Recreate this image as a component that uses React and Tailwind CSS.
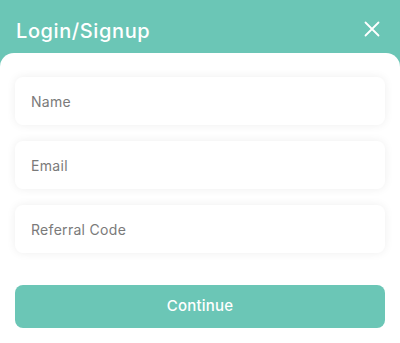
import React from "react";

const TEAL = "#6bc6b6";

function Field({ placeholder }) {
  return (
    <input
      type="text"
      placeholder={placeholder}
      className="w-full h-12 rounded-lg bg-white px-4 text-[14px] tracking-[0.3px] text-gray-700 placeholder:text-[#7a7a7a] outline-none shadow-[0_0_10px_rgba(0,0,0,0.07)]"
    />
  );
}

export default function App() {
  return (
    <div
      className="w-[400px] h-[343px] flex flex-col"
      style={{ backgroundColor: TEAL, fontFamily: "Inter, 'Noto Sans', sans-serif" }}
    >
      <div className="h-[53px] flex items-center justify-between pl-4 pr-5 pt-1">
        <h1 className="text-white text-[20px] font-medium tracking-[0.6px] pt-1">Login/Signup</h1>
        <button className="text-white">
          <svg width="16" height="16" viewBox="0 0 16 16" fill="none" stroke="currentColor" strokeWidth="1.8" strokeLinecap="round">
            <path d="M1.5 1.5L14.5 14.5M14.5 1.5L1.5 14.5" />
          </svg>
        </button>
      </div>
      <div className="flex-1 bg-white rounded-t-[14px] px-[15px] pt-6 flex flex-col">
        <div className="flex flex-col gap-4">
          <Field placeholder="Name" />
          <Field placeholder="Email" />
          <Field placeholder="Referral Code" />
        </div>
        <button
          className="mt-8 h-[43px] rounded-lg text-white text-[15px] font-medium tracking-[0.2px]"
          style={{ backgroundColor: TEAL }}
        >
          Continue
        </button>
      </div>
    </div>
  );
}
